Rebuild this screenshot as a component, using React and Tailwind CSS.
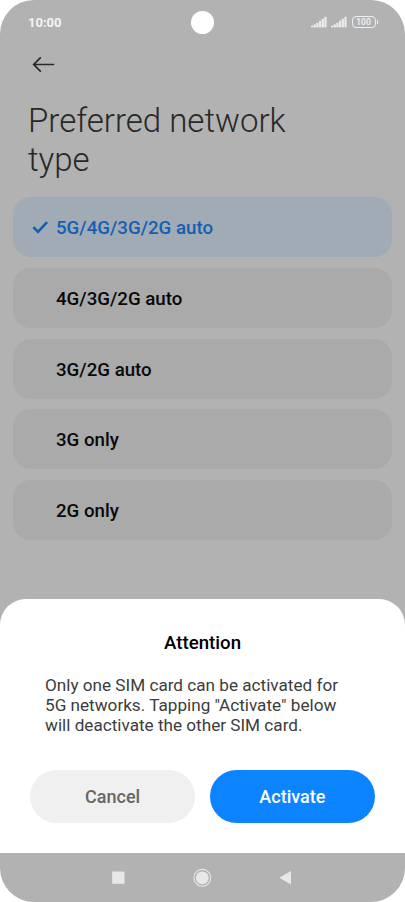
import { useState } from 'react';

const networkTypes = [
    '5G/4G/3G/2G auto',
    '4G/3G/2G auto',
    '3G/2G auto',
    '3G only',
    '2G only',
];

function SignalIcon() {
    return (
        <svg width="16" height="12" viewBox="0 0 16 12" fill="#ececec">
            <rect x="0" y="9.8" width="2.4" height="1.6" />
            <rect x="2.7" y="8.4" width="2.2" height="3" />
            <rect x="5.3" y="6.8" width="2.2" height="4.6" />
            <rect x="8" y="4.8" width="2.2" height="6.6" />
            <rect x="10.7" y="2.8" width="2.2" height="8.6" />
            <rect x="13.4" y="0.8" width="2.2" height="10.6" />
        </svg>
    );
}

function BatteryIcon() {
    return (
        <div className="flex items-center">
            <div className="flex h-[12px] w-[24px] items-center justify-center rounded-[4px] border-[1.5px] border-[#efefef] text-[8.5px] leading-none font-medium text-[#f2f2f2]">
                100
            </div>
            <div className="ml-px h-[4px] w-[1.5px] rounded-r bg-[#efefef]" />
        </div>
    );
}

function StatusBar() {
    return (
        <div className="relative flex h-[44px] items-center justify-between pr-[27px] pl-7">
            <span className="pt-[2px] text-[13px] font-bold text-[#f4f4f4]">10:00</span>
            {/* camera cutout */}
            <div className="absolute top-[10.5px] left-[191px] size-[23px] rounded-full bg-white" />
            <div className="flex items-center">
                <SignalIcon />
                <div className="ml-1 mr-[5px]">
                    <SignalIcon />
                </div>
                <BatteryIcon />
            </div>
        </div>
    );
}

function NetworkOption({ label, selected, onSelect }) {
    return (
        <button
            type="button"
            onClick={onSelect}
            className={`flex h-[60px] w-full items-center rounded-[18px] pt-[2px] pl-[19px] text-left text-[18.7px] font-medium ${
                selected ? 'bg-[#a0abb5] text-[#145fb3]' : 'bg-[#aaaaaa] text-[#080808]'
            }`}
        >
            <span className="w-6">
                {selected && (
                    <svg width="17" height="14" viewBox="0 0 17 14" fill="none" stroke="#145fb3" strokeWidth="2.6">
                        <path d="M1.4 6.2L6 10.8L15.1 1.1" />
                    </svg>
                )}
            </span>
            {label}
        </button>
    );
}

function AttentionDialog() {
    return (
        <div className="h-[254.5px] rounded-t-[26px] bg-white px-[30px] pt-[32px]">
            <h2 className="text-center text-[18.7px] leading-6 font-medium text-black">Attention</h2>
            <p className="mt-[20px] px-[15px] text-[17.15px] leading-[20.4px] text-[#3c3c3c]">
                Only one SIM card can be activated for
                <br />
                5G networks. Tapping "Activate" below
                <br />
                will deactivate the other SIM card.
            </p>
            <div className="mt-[34.5px] flex gap-[14.5px]">
                <button
                    type="button"
                    className="h-[53px] flex-1 rounded-full bg-[#f0f0f0] text-[18px] font-medium text-[#666666]"
                >
                    Cancel
                </button>
                <button
                    type="button"
                    className="h-[53px] flex-1 rounded-full bg-[#0d84ff] text-[18px] font-medium text-white"
                >
                    Activate
                </button>
            </div>
        </div>
    );
}

function NavBar() {
    return (
        <div className="flex h-[49px] justify-center">
            <svg width="405" height="49" viewBox="0 0 405 49" fill="#e8e8e8">
                <rect x="112.2" y="18.5" width="12.3" height="12.3" />
                <circle cx="202.3" cy="24.8" r="6.4" />
                <circle cx="202.3" cy="24.8" r="8.4" fill="none" stroke="#e8e8e8" strokeWidth="1.1" />
                <path d="M279.3 24.7L291 18.1V31.4Z" />
            </svg>
        </div>
    );
}

function App() {
    const [selected, setSelected] = useState(networkTypes[0]);

    return (
        <div className="h-[902px] w-[405px] overflow-hidden bg-white font-['Roboto',sans-serif]">
            <div className="flex h-full flex-col overflow-hidden rounded-[34px] bg-[#b2b2b2]">
                <StatusBar />
                <div className="pt-[12px] pl-8">
                    <svg width="23" height="17" viewBox="0 0 23 17" fill="none" stroke="#282828" strokeWidth="1.7">
                        <path d="M8.3 1.9L1.7 8.5L8.3 15.1M1.7 8.5H21.5" strokeLinecap="round" />
                    </svg>
                </div>
                <h1 className="mt-[27.5px] pl-7 text-[33px] leading-[39px] font-light text-[#282828]">
                    Preferred network
                    <br />
                    type
                </h1>
                <div className="mt-[18.9px] flex flex-1 flex-col gap-[10.7px] px-[13px]">
                    {networkTypes.map((type) => (
                        <NetworkOption
                            key={type}
                            label={type}
                            selected={type === selected}
                            onSelect={() => setSelected(type)}
                        />
                    ))}
                </div>
                <AttentionDialog />
                <NavBar />
            </div>
        </div>
    );
}

export default App;
